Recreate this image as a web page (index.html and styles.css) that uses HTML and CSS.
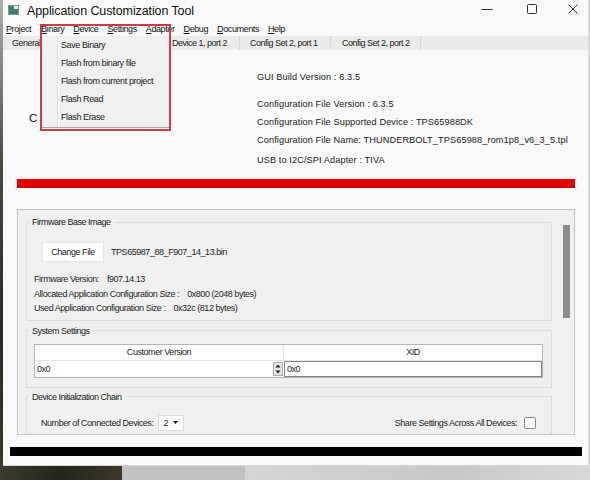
FILE: index.html
```html
<!DOCTYPE html>
<html>
<head>
<meta charset="utf-8">
<title>Application Customization Tool</title>
<link rel="stylesheet" href="styles.css">
</head>
<body>
<div class="screen">
  <div class="top">
    <div class="edge-left"></div>
    <div class="window">
      <div class="titlebar">
        <svg class="app-icon" width="11" height="10" viewBox="0 0 11 10"><rect x="0.5" y="0.5" width="10" height="9" fill="#3f7d6e" stroke="#7d9a93"/><rect x="6" y="1" width="4" height="3" fill="#e6eeec"/></svg>
        <span class="title">Application Customization Tool</span>
        <div class="controls">
          <span class="ctl"><svg width="12" height="12" viewBox="0 0 12 12"><line x1="0.5" y1="6.5" x2="11.5" y2="6.5" stroke="#333" stroke-width="1"/></svg></span>
          <span class="ctl ctl-max"><svg width="12" height="12" viewBox="0 0 12 12"><rect x="1.5" y="1.5" width="9" height="9" rx="1" fill="none" stroke="#333" stroke-width="1"/></svg></span>
          <span class="ctl ctl-close"><svg width="12" height="12" viewBox="0 0 12 12"><path d="M1.5 1.5 L10.5 10.5 M10.5 1.5 L1.5 10.5" fill="none" stroke="#333" stroke-width="1"/></svg></span>
        </div>
      </div>
      <div class="menubar">
        <span class="mi"><u>P</u>roject</span>
        <span class="mi mi-binary"><u>B</u>inary</span>
        <span class="mi"><u>D</u>evice</span>
        <span class="mi"><u>S</u>ettings</span>
        <span class="mi"><u>A</u>dapter</span>
        <span class="mi"><u>D</u>ebug</span>
        <span class="mi"><u>D</u>ocuments</span>
        <span class="mi"><u>H</u>elp</span>
      </div>
      <div class="tabs">
        <span class="tab tab-general">General</span>
        <span class="tab tab-d1p1"></span>
        <span class="tab tab-d1p2">Device 1, port 2</span>
        <span class="tab tab-c1">Config Set 2, port 1</span>
        <span class="tab tab-c2">Config Set 2, port 2</span>
      </div>
      <div class="info">
        <div class="info-left">C</div>
        <div class="info-right">
          <p class="line">GUI Build Version : 6.3.5</p>
          <p class="line gap">Configuration File Version : 6.3.5</p>
          <p class="line">Configuration File Supported Device : TPS65988DK</p>
          <p class="line">Configuration File Name: THUNDERBOLT_TPS65988_rom1p8_v6_3_5.tpl</p>
          <p class="line gap2">USB to I2C/SPI Adapter : TIVA</p>
        </div>
      </div>
      <div class="redbar"></div>
      <div class="panel">
        <div class="groups">
          <fieldset class="group g1">
            <legend>Firmware Base Image</legend>
            <div class="file-row">
              <span class="btn">Change File</span>
              <span class="fname">TPS65987_88_F907_14_13.bin</span>
            </div>
            <div class="kv first"><span>Firmware Version:</span><span class="val">f907.14.13</span></div>
            <div class="kv"><span>Allocated Application Configuration Size :</span><span class="val">0x800 (2048 bytes)</span></div>
            <div class="kv"><span>Used Application Configuration Size :</span><span class="val">0x32c (812 bytes)</span></div>
          </fieldset>
          <fieldset class="group g2">
            <legend>System Settings</legend>
            <div class="table">
              <div class="thead">
                <div class="th c1">Customer Version</div>
                <div class="th c2">XID</div>
              </div>
              <div class="trow">
                <div class="td c1">
                  <span>0x0</span>
                  <svg class="spin" width="10" height="14" viewBox="0 0 10 14"><rect x="0.5" y="0.5" width="9" height="13" fill="#e4e4e4" stroke="#b0b0b0"/><path d="M2.5 5.5 L5 2.5 L7.5 5.5 Z M2.5 8.5 L5 11.5 L7.5 8.5 Z" fill="#222"/></svg>
                </div>
                <div class="td c2">0x0</div>
              </div>
            </div>
          </fieldset>
          <fieldset class="group g3">
            <legend>Device Initialization Chain</legend>
            <div class="dev-row">
              <span>Number of Connected Devices:</span>
              <span class="combo"><span>2</span><svg class="arrow" width="5" height="3" viewBox="0 0 5 3"><path d="M0 0 L5 0 L2.5 3 Z" fill="#111"/></svg></span>
              <span class="share">Share Settings Across All Devices:</span>
              <span class="check"></span>
            </div>
          </fieldset>
        </div>
        <div class="scroll"><div class="thumb"></div></div>
      </div>
      <div class="blackbar"></div>
    </div>
    <div class="edge-right"></div>
  </div>
  <div class="bottom">
    <div class="b1"></div>
    <div class="b2"></div>
    <div class="b3"></div>
  </div>
  <div class="dropdown">
    <div class="dd-gap"></div>
    <div class="dd-menu">
      <div class="dd-item">Save Binary</div>
      <div class="dd-item">Flash from binary file</div>
      <div class="dd-item">Flash from current project</div>
      <div class="dd-item">Flash Read</div>
      <div class="dd-item">Flash Erase</div>
    </div>
  </div>
</div>
</body>
</html>
```
FILE: styles.css
```css
* { box-sizing: border-box; }
html, body { margin: 0; padding: 0; }
body {
  width: 590px;
  height: 480px;
  overflow: hidden;
  font-family: "Liberation Sans", Arial, sans-serif;
  color: #1b1b1b;
}
.screen {
  position: relative;
  width: 590px;
  height: 480px;
  display: flex;
  flex-direction: column;
  background: #cfcfcf;
}
.top { display: flex; height: 466px; }
.edge-left { width: 3px; flex: none; background: linear-gradient(#b0b0b0, #4a4940 35%, #2b2a23 70%, #3a372b); }
.window {
  width: 585px;
  flex: none;
  display: flex;
  flex-direction: column;
  background: #f9f9f9;
  border-bottom: 1px solid #d6d6d6;
}
.edge-right { flex: 1; background: linear-gradient(90deg, #e2e2e2, #cfcfcf); }

/* title bar */
.titlebar { height: 21px; display: flex; align-items: center; }
.app-icon { margin-left: 5px; margin-top: -1px; flex: none; }
.title { margin-left: 8px; font-size: 12.5px; letter-spacing: -0.1px; color: #111; }
.controls { margin-left: auto; display: flex; align-items: flex-start; height: 21px; padding-top: 3px; padding-right: 2px; }
.ctl { width: 26px; height: 12px; display: flex; justify-content: center; }
.ctl-max { margin-left: 19px; }
.ctl-close { margin-left: 15px; }

/* menu bar */
.menubar {
  height: 15px;
  display: flex;
  align-items: center;
  gap: 9px;
  padding-left: 3px;
  font-size: 9px;
  letter-spacing: -0.4px;
  color: #111;
}
.mi-binary { margin-left: 1px; }
.mi u { text-decoration: underline; text-underline-offset: 1px; }

/* tabs */
.tabs {
  height: 14px;
  display: flex;
  background: #ebebeb;
  font-size: 9px;
  letter-spacing: -0.5px;
  color: #222;
}
.tab {
  display: flex;
  align-items: center;
  padding-left: 10px;
  border-right: 1px solid #d8d8d8;
  white-space: nowrap;
  overflow: hidden;
}
.tab-general { width: 80px; padding-left: 9px; }
.tab-d1p1 { width: 79px; }
.tab-d1p2 { width: 78px; }
.tab-c1 { width: 91px; }
.tab-c2 { width: 90px; padding-left: 11px; }

/* info */
.info { display: flex; padding-top: 18px; }
.info-left { width: 254px; flex: none; padding-left: 26px; padding-top: 41px; font-size: 11.5px; line-height: 18px; color: #111; }
.info-right { font-size: 9.2px; letter-spacing: 0.1px; color: #1a1a1a; }
.line { margin: 0; line-height: 18px; white-space: nowrap; }
.line.gap { margin-top: 9px; }
.line.gap2 { margin-top: 2px; }

.redbar { margin: 10px 13px 0 14px; height: 9px; background: #e00000; border-bottom: 1px solid #c40000; }

/* panel */
.panel {
  margin: 21px 13px 0 14px;
  height: 226px;
  border: 1px solid #c4c4c4;
  background: #f0f0f0;
  display: flex;
  overflow: hidden;
  font-size: 9px;
  letter-spacing: -0.45px;
  color: #1e1e1e;
}
.groups { width: 534px; padding: 6px 0 0 8px; flex: none; }
.scroll { flex: 1; }
.thumb { margin: 15px 0 0 11px; width: 7px; height: 93px; background: #8c8c8c; }

fieldset.group {
  margin: 0;
  padding: 0;
  border: 1px solid #dddddd;
  min-width: 0;
}
fieldset.g2 { margin-top: 4px; padding-bottom: 9px; }
fieldset.g3 { margin-top: 3px; padding-bottom: 20px; }
fieldset.g1 { padding-bottom: 4px; }
legend {
  font-size: 9px;
  line-height: 12px;
  letter-spacing: -0.5px;
  padding: 0 3px;
  margin-left: 2px;
  color: #222;
}
.file-row { display: flex; align-items: center; margin-top: 14px; padding-left: 15px; }
.btn {
  width: 62px;
  height: 20px;
  background: #fff;
  border: 1px solid #e6e6e6;
  display: flex;
  align-items: center;
  justify-content: center;
  color: #1a1a1a;
}
.fname { margin-left: 7px; }
.kv { padding-left: 7px; line-height: 14.5px; white-space: nowrap; }
.kv.first { margin-top: 10px; }
.val { margin-left: 8px; }

.table {
  margin-left: 7px;
  margin-top: 7px;
  width: 509px;
  border: 1px solid #b3b3b3;
  background: #fff;
}
.thead { display: flex; height: 16px; border-bottom: 1px solid #e6e6e6; }
.th { display: flex; align-items: center; justify-content: center; }
.th.c1 { width: 249px; border-right: 1px solid #e6e6e6; }
.th.c2 { flex: 1; }
.trow { display: flex; height: 16px; }
.td.c1 { width: 249px; display: flex; align-items: center; padding-left: 2px; }
.spin { margin-left: auto; margin-right: 1px; }
.td.c2 { flex: 1; border: 1px solid #858585; display: flex; align-items: center; padding-left: 2px; }

.dev-row {
  display: flex;
  align-items: center;
  height: 16px;
  margin-top: 12px;
  padding: 0 15px 0 14px;
}
.combo {
  margin-left: 5px;
  width: 26px;
  height: 16px;
  background: #fff;
  border: 1px solid #dcdcdc;
  display: flex;
  align-items: center;
  padding-left: 4px;
}
.combo .arrow { margin-left: auto; margin-right: 5px; }
.share { margin-left: auto; }
.check {
  margin-left: 7px;
  width: 12px;
  height: 12px;
  border: 1px solid #8a8a8a;
  border-radius: 2px;
  background: #fff;
}

.blackbar { margin: 12px 6px 0 7px; height: 9px; background: #000; }

/* desktop strip */
.bottom { height: 14px; display: flex; }
.b1 { width: 122px; background: linear-gradient(90deg, #3b3a2c, #25251d 50%, #3c3829); }
.b2 { width: 123px; background: #c2c2c2; }
.b3 { flex: 1; background: linear-gradient(90deg, #d4d4d4, #c8c8c8 60%, #d8d8d8); }

/* open dropdown menu with highlight frame */
.dropdown {
  position: absolute;
  left: 40px;
  top: 24px;
  width: 131px;
  height: 107px;
  border: 2px solid #d03a44;
  display: flex;
  flex-direction: column;
}
.dd-gap { height: 10px; }
.dd-menu {
  height: 92px;
  background: linear-gradient(90deg, #f0f0f0 15px, #dedede 15px, #dedede 16px, #fbfbfb 16px, #fbfbfb 17px, #f0f0f0 17px);
  border-bottom: 1px solid #a6a6a6;
  font-size: 9px;
  letter-spacing: -0.4px;
  color: #1a1a1a;
}
.dd-item { height: 18px; display: flex; align-items: center; padding-left: 19px; white-space: nowrap; }
```
